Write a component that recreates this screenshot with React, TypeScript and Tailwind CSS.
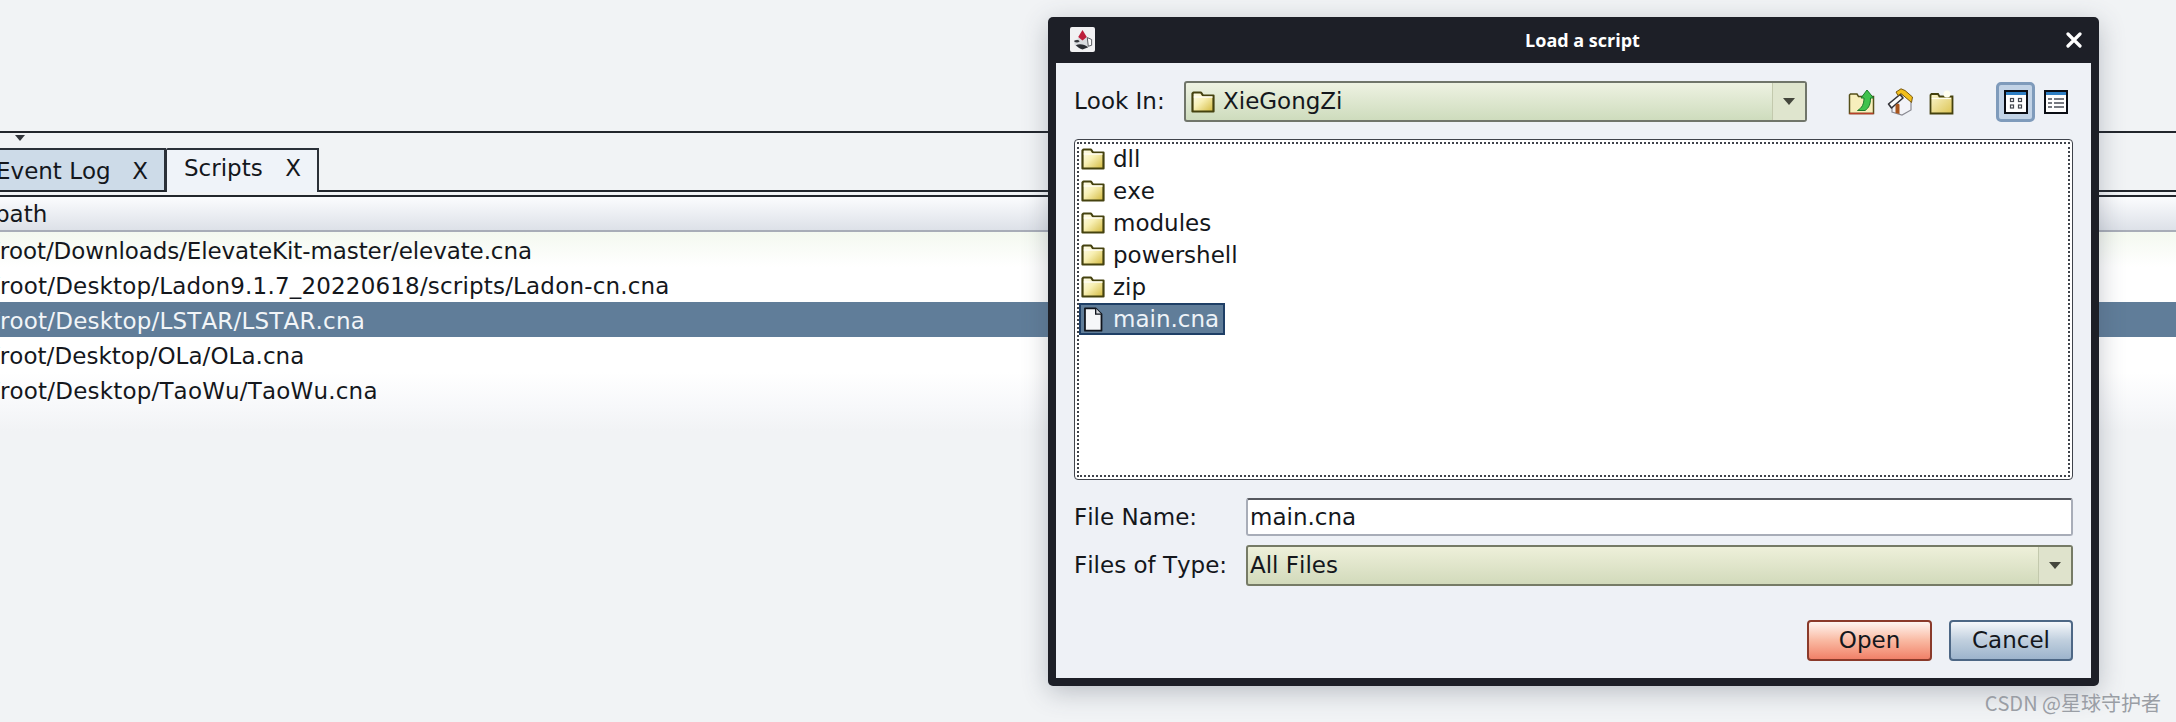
import { useId } from "react";

const FONT = "font-['DejaVu_Sans',sans-serif] [font-kerning:none]";

const scriptRows = [
  { path: "/root/Downloads/ElevateKit-master/elevate.cna", tracking: "tracking-[-0.09px]" },
  { path: "/root/Desktop/Ladon9.1.7_20220618/scripts/Ladon-cn.cna", tracking: "tracking-[0.18px]" },
  { path: "/root/Desktop/LSTAR/LSTAR.cna", tracking: "tracking-[0.19px]" },
  { path: "/root/Desktop/OLa/OLa.cna", tracking: "tracking-[0.05px]" },
  { path: "/root/Desktop/TaoWu/TaoWu.cna", tracking: "tracking-[0.19px]" },
];

const folders = ["dll", "exe", "modules", "powershell", "zip"];

function FolderIcon({ className = "" }: { className?: string }) {
  const id = useId();
  return (
    <svg viewBox="0 0 24 22" className={className}>
      <defs>
        <linearGradient id={id} x1="0" y1="0" x2="1" y2="1">
          <stop offset="0" stopColor="#fffef2" />
          <stop offset="0.45" stopColor="#f8f0b4" />
          <stop offset="1" stopColor="#d2b83c" />
        </linearGradient>
      </defs>
      <path
        d="M1.5 20.5V2.5L2.5 1.5H10L12 4.5H22.5V20.5Z"
        fill={`url(#${id})`}
        stroke="#45420f"
        strokeWidth="2.2"
        strokeLinejoin="round"
      />
      <path d="M2.8 6H21.5" stroke="#fffdf0" strokeWidth="1.5" />
    </svg>
  );
}

function FileIcon() {
  return (
    <svg viewBox="0 0 22 28" className="h-[25px] w-[20px]">
      <path d="M2 1.5H14L20.5 8V26.5H2Z" fill="#f6f7f9" stroke="#10141c" strokeWidth="2" strokeLinejoin="round" />
      <path d="M14 1.5V8H20.5" fill="#d8dbe0" stroke="#10141c" strokeWidth="1.5" />
    </svg>
  );
}

function DukeIcon() {
  return (
    <svg viewBox="0 0 26 26" className="h-[25px] w-[25px]">
      <rect width="26" height="26" rx="2" fill="#f1f1f3" />
      <path d="M4 15L11 10H16L22 13L21 20L11 23L5 19Z" fill="#d9dbdf" />
      <path d="M13 3L17.5 10.5L13 14L8.5 10.5Z" fill="#bd1f3c" />
      <path d="M4 14.5C6 13 9 13 10 15C8 16.5 6 16.5 4 14.5Z" fill="#33353b" />
      <path d="M6 19C10 17 15 18 19 21L13 23.5C10 22.5 8 21 6 19Z" fill="#2b2d33" />
      <path d="M18 11L22.5 13V19L19 20Z" fill="#fbfbfc" stroke="#55575d" strokeWidth="1" />
    </svg>
  );
}

function UpFolderIcon() {
  return (
    <svg viewBox="0 0 27 26" className="h-[26px] w-[27px]">
      <path d="M1.5 24.5V6L2.5 5H9L10.5 7.5H25.5V24.5Z" fill="#f7efbc" stroke="#55501a" strokeWidth="1.5" />
      <path d="M1.5 24.5H25.5" stroke="#b8402a" strokeWidth="1.6" />
      <path d="M19 1L25.5 9H22.5C22.5 15 21 19 17 21.5H9.5C14 19 16 15 16 9H13Z" fill="#3fc24d" stroke="#1a7a2a" strokeWidth="1" strokeLinejoin="round" />
    </svg>
  );
}

function HomeIcon() {
  return (
    <svg viewBox="0 0 27 28" className="h-[28px] w-[27px]">
      <path d="M5 15V24L15 27L24 22V12L14 6Z" fill="#f2f3f8" stroke="#8a8a92" strokeWidth="1.2" />
      <path d="M1.5 16L13 6.5L16 10L4.5 20Z" fill="#fbfbfb" stroke="#333338" strokeWidth="1.6" strokeLinejoin="round" />
      <path d="M9 4L14 0.8L18 2.5L25.5 9L24.5 14.5L14 5.5L11 7.5Z" fill="#f2bf1c" stroke="#7a5a10" strokeWidth="1" strokeLinejoin="round" />
      <path d="M8.5 25V17.5C8.5 15.5 12.5 15 12.5 17V26Z" fill="#a8551c" />
    </svg>
  );
}

function NewFolderIcon() {
  const id = useId();
  return (
    <svg viewBox="0 0 25 26" className="h-[26px] w-[25px]">
      <defs>
        <linearGradient id={id} x1="0" y1="0" x2="1" y2="1">
          <stop offset="0" stopColor="#fbf7d0" />
          <stop offset="1" stopColor="#dcc452" />
        </linearGradient>
      </defs>
      <path d="M1.5 24.5V6L2.5 5H9L10.5 7.5H23.5V24.5Z" fill={`url(#${id})`} stroke="#45420f" strokeWidth="1.8" />
      <path d="M2.8 9.5H22" stroke="#fffdf0" strokeWidth="1.2" />
      <circle cx="18" cy="5" r="3.5" fill="#fffef0" />
    </svg>
  );
}

function DetailsIcon() {
  return (
    <svg viewBox="0 0 24 24" className="h-[24px] w-[24px]">
      <rect x="1" y="1" width="22" height="22" fill="#fff" stroke="#0a0d14" strokeWidth="2" />
      <rect x="2" y="2" width="20" height="3" fill="#2f7fc4" />
      <path d="M4 9H8M10 9H20M4 13H8M10 13H20M4 17H8M10 17H20" stroke="#4a4e58" strokeWidth="1.5" />
    </svg>
  );
}

function IconsViewIcon() {
  return (
    <svg viewBox="0 0 24 24" className="h-[24px] w-[24px]">
      <rect x="1" y="1" width="22" height="22" fill="#fff" stroke="#0a0d14" strokeWidth="2" />
      <rect x="2" y="2" width="20" height="3" fill="#2f7fc4" />
      <rect x="6.5" y="8.5" width="3" height="3" fill="none" stroke="#44484f" strokeWidth="1.2" />
      <rect x="14.5" y="8.5" width="3" height="3" fill="none" stroke="#44484f" strokeWidth="1.2" />
      <rect x="6.5" y="15" width="3" height="3" fill="none" stroke="#44484f" strokeWidth="1.2" />
      <rect x="14.5" y="15" width="3" height="3" fill="none" stroke="#44484f" strokeWidth="1.2" />
    </svg>
  );
}

function ComboArrow({ className = "" }: { className?: string }) {
  return (
    <div className={`flex items-center justify-center border-l border-[#c3c9ad] ${className}`}>
      <div className="h-0 w-0 border-x-[6px] border-t-[7px] border-x-transparent border-t-[#44463c]" />
    </div>
  );
}

function ScriptsPanel() {
  return (
    <div className="pt-[131px]">
      <div className="h-[2px] bg-[#22262c]" />
      <div className="relative flex h-[59px] items-end border-b-2 border-[#22262c]">
        <div className="absolute left-[15px] top-[2px] h-0 w-0 border-x-[5px] border-t-[6px] border-x-transparent border-t-[#33363c]" />
        <div className="flex h-[42px] w-[166px] items-center justify-between overflow-hidden border-r-2 border-t-2 border-[#2a3038] bg-[#cddbe8] pr-[16px] pt-[2px]">
          <span className="-ml-[4px] text-[23px] text-[#14171c]">Event Log</span>
          <span className="text-[23px] text-[#14171c]">X</span>
        </div>
        <div className="-mb-[2px] flex h-[44px] w-[153px] items-start justify-between rounded-tl-[2px] border-r-2 border-t-2 border-l border-[#2a3038] bg-[#eff3f9] pl-[17px] pr-[16px] pt-[1px]">
          <span className="text-[23px] text-[#14171c]">Scripts</span>
          <span className="text-[23px] text-[#14171c]">X</span>
        </div>
      </div>
      <div className="mt-[3px] h-[2px] bg-[#22262c]" />
      <div className="flex h-[35px] items-center overflow-hidden border-b-2 border-[#a8adb8] bg-gradient-to-b from-[#fbfcfe] to-[#dde1e8] pt-[2px]">
        <span className="-ml-[5px] text-[23px] text-[#14171c]">path</span>
      </div>
      <div>
        {scriptRows.map((row, i) => (
          <div
            key={row.path}
            className={`flex h-[35px] items-center overflow-hidden pt-[3px] ${
              i === 2 ? "bg-[#607d99] text-[#f2f5f8]" : "bg-white text-[#14171c]"
            } ${i === 0 ? "bg-gradient-to-b from-[#f4f9f0] to-white" : ""} ${
              i === 4 ? "bg-gradient-to-b from-white to-[#f7f8fa]" : ""
            }`}
          >
            <span className={`-ml-[8px] whitespace-nowrap text-[23px] ${row.tracking}`}>{row.path}</span>
          </div>
        ))}
        <div className="h-[24px] bg-gradient-to-b from-[#f7f8fa] to-[#f1f3f5]" />
      </div>
    </div>
  );
}

function LoadDialog() {
  return (
    <div className="absolute left-[1048px] top-[17px] flex h-[669px] w-[1051px] flex-col rounded-[5px] bg-[#1d1f27] px-[8px] pb-[8px] shadow-[0_6px_26px_rgba(60,70,85,0.3)]">
      <div className="relative flex h-[46px] shrink-0 items-center justify-center pl-[18px]">
        <div className="absolute left-[14px] top-[10px]">
          <DukeIcon />
        </div>
        <span className="font-['Open_Sans',sans-serif] text-[18px] font-bold text-white">Load a script</span>
        <svg viewBox="0 0 16 16" className="absolute right-[9px] top-[15px] h-[16px] w-[16px]">
          <path d="M2 2L14 14M14 2L2 14" stroke="#fff" strokeWidth="3.2" strokeLinecap="round" />
        </svg>
      </div>

      <div className="flex min-h-0 flex-1 flex-col bg-[#eef1f6] pl-[18px] pr-[18px] pt-[18px] text-[#14171c]">
        <div className="flex h-[41px] items-center">
          <span className="w-[110px] text-[23px]">Look In:</span>
          <div className="flex h-[41px] w-[623px] items-center rounded-[3px] border-2 border-[#70756a] bg-gradient-to-b from-[#eef2e2] to-[#cedcbd] pl-[5px]">
            <FolderIcon className="h-[22px] w-[24px]" />
            <span className="ml-[8px] text-[23px]">XieGongZi</span>
            <ComboArrow className="ml-auto h-full w-[33px] bg-[#dfe5ce]" />
          </div>
          <div className="ml-[41px] flex items-center">
            <UpFolderIcon />
            <div className="ml-[12px]">
              <HomeIcon />
            </div>
            <div className="ml-[15px]">
              <NewFolderIcon />
            </div>
            <div className="ml-[42px] flex h-[40px] w-[39px] items-center justify-center rounded-[5px] border-[3px] border-[#7f9bbb] bg-[#c2d3e6]">
              <IconsViewIcon />
            </div>
            <div className="ml-[9px]">
              <DetailsIcon />
            </div>
          </div>
        </div>

        <div className="mt-[17px] h-[341px] rounded-[4px] border border-[#3f434b] bg-white p-[2px]">
          <div className="h-full border-2 border-dotted border-[#3f434b]">
            <div className="-mt-[1px]">
              {folders.map((f) => (
                <div key={f} className="flex h-[32px] items-center">
                  <FolderIcon className="ml-[2px] h-[22px] w-[24px]" />
                  <span className="ml-[8px] text-[23px]">{f}</span>
                </div>
              ))}
              <div className="flex h-[32px] w-[146px] items-center border-2 border-[#1f3f66] bg-[#607d99] pl-[2px]">
                <FileIcon />
                <span className="ml-[10px] text-[23px] text-[#eef3f8]">main.cna</span>
              </div>
            </div>
          </div>
        </div>

        <div className="mt-[18px] flex h-[38px] items-center">
          <span className="w-[172px] text-[23px]">File Name:</span>
          <div className="flex h-[38px] flex-1 items-center rounded-[3px] border-2 border-t-[#55585f] border-x-[#a8adb8] border-b-[#a8adb8] bg-white pl-[2px] text-[23px]">
            main.cna
          </div>
        </div>

        <div className="mt-[9px] flex h-[41px] items-center">
          <span className="w-[172px] text-[23px]">Files of Type:</span>
          <div className="flex h-[41px] flex-1 items-center rounded-[3px] border-2 border-[#767b66] bg-gradient-to-b from-[#eef0da] to-[#d2dabb] pl-[2px]">
            <span className="text-[23px]">All Files</span>
            <ComboArrow className="ml-auto h-full w-[33px] bg-[#dfe3cc]" />
          </div>
        </div>

        <div className="mt-[34px] flex justify-end gap-[17px]">
          <button className="h-[41px] w-[125px] rounded-[4px] border-2 border-[#8a3a2a] bg-gradient-to-b from-[#fdf5f0] via-[#f9b9a2] to-[#f08068] text-[23px] text-[#14171c]">
            Open
          </button>
          <button className="h-[41px] w-[124px] rounded-[4px] border-2 border-[#4d6785] bg-gradient-to-b from-[#f6f8fb] via-[#c0cfde] to-[#9db4cc] text-[23px] text-[#14171c]">
            Cancel
          </button>
        </div>
      </div>
    </div>
  );
}

export default function App() {
  return (
    <div className={`relative h-[722px] w-[2176px] overflow-hidden bg-[#f1f3f5] ${FONT}`}>
      <ScriptsPanel />
      <LoadDialog />
      <div className="absolute bottom-[4px] right-[15px] font-['Noto_Sans_CJK_SC',sans-serif] text-[20px] text-[#9a9ea5]">
        CSDN @星球守护者
      </div>
    </div>
  );
}
